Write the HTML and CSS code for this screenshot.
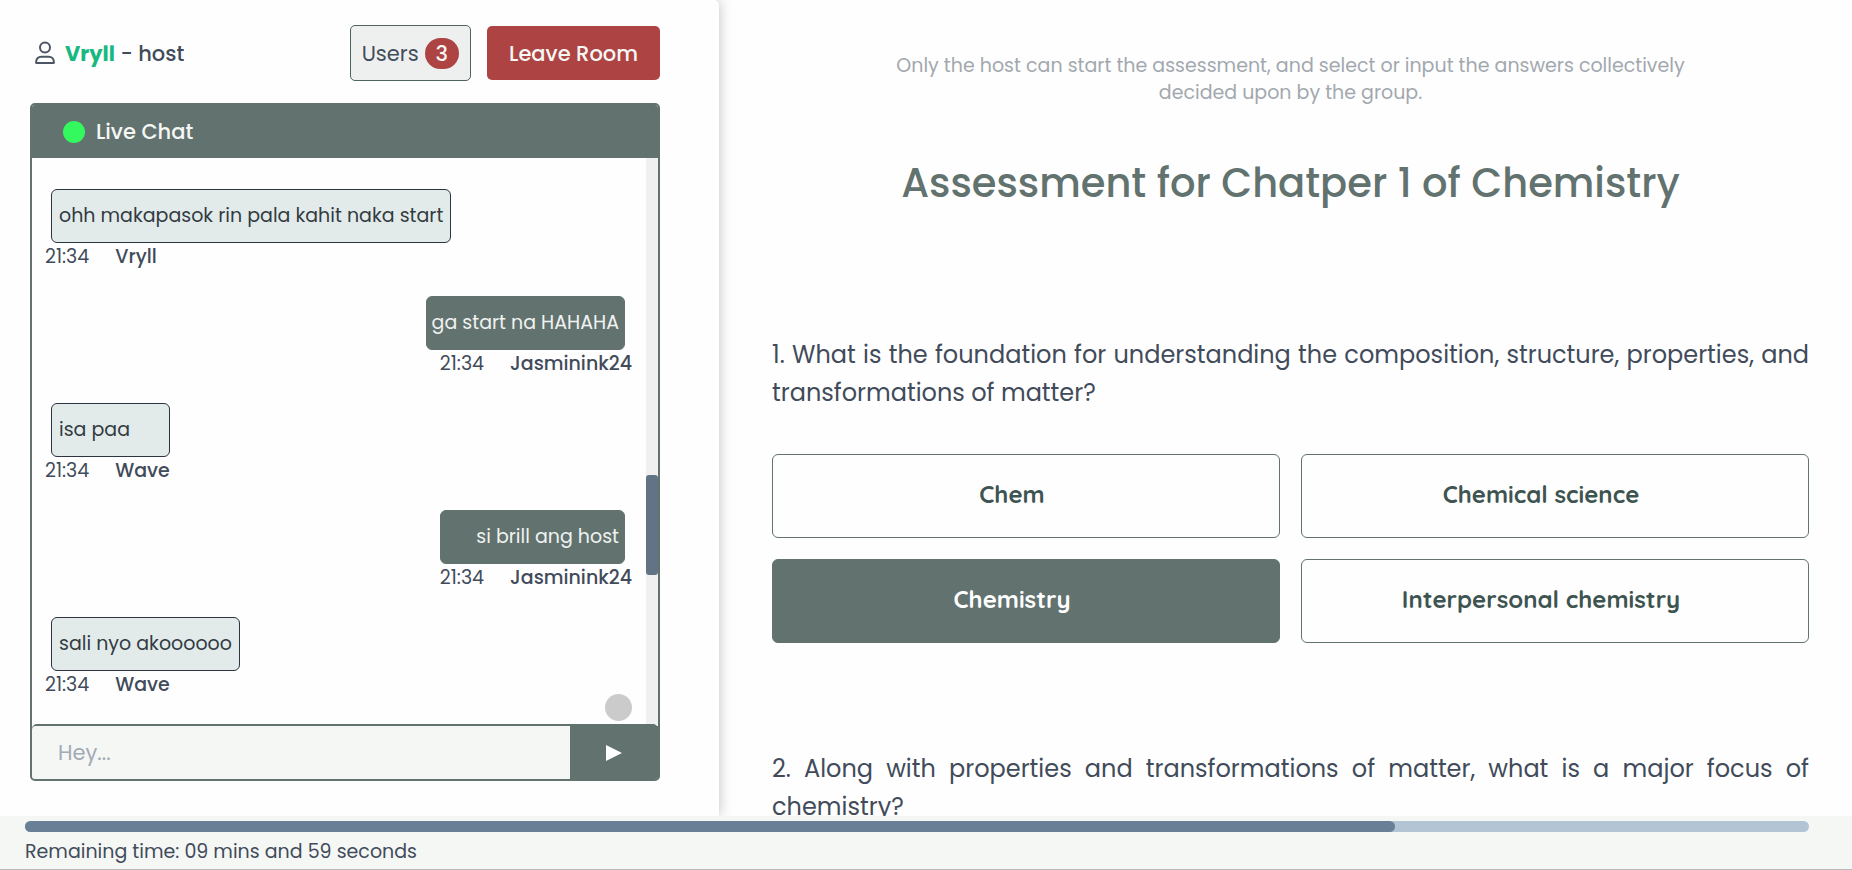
FILE: index.html
```html
<!DOCTYPE html>
<html lang="en">
<head>
<meta charset="utf-8">
<meta name="viewport" content="width=device-width, initial-scale=1">
<title>Assessment Room</title>
<link rel="stylesheet" href="styles.css">
</head>
<body>
<div class="page">
  <div class="room">
    <aside class="panel">
      <header class="panel-head">
        <p class="me">
          <svg class="user-icon" viewBox="0 0 20 24" aria-hidden="true"><circle cx="10" cy="6.500" r="5"/><path d="M1.200 22v-1.500c0-3 2.300-4.800 5-4.800h7.600c2.700 0 5 1.800 5 4.800v1.500z"/></svg>
          <span><strong class="me-name">Vryll</strong> - host</span>
        </p>
        <div class="actions">
          <button class="users" type="button">Users <span class="count">3</span></button>
          <button class="leave" type="button">Leave Room</button>
        </div>
      </header>
      <section class="chat">
        <h2 class="chat-head"><span class="live-dot"></span>Live Chat</h2>
        <div class="chat-body">
          <div class="messages">
            <article class="msg">
              <p class="bubble">ohh makapasok rin pala kahit naka start</p>
              <p class="meta"><time>21:34</time><span class="who">Vryll</span></p>
            </article>
            <article class="msg mine">
              <p class="bubble">ga start na HAHAHA</p>
              <p class="meta"><time>21:34</time><span class="who">Jasminink24</span></p>
            </article>
            <article class="msg">
              <p class="bubble">isa paa</p>
              <p class="meta"><time>21:34</time><span class="who">Wave</span></p>
            </article>
            <article class="msg mine">
              <p class="bubble">si brill ang host</p>
              <p class="meta"><time>21:34</time><span class="who">Jasminink24</span></p>
            </article>
            <article class="msg">
              <p class="bubble">sali nyo akoooooo</p>
              <p class="meta"><time>21:34</time><span class="who">Wave</span></p>
            </article>
          </div>
          <div class="track"><div class="thumb"></div></div>
          <button class="to-bottom" type="button" aria-label="Scroll to latest"></button>
        </div>
        <form class="composer">
          <input class="message-input" type="text" placeholder="Hey..." aria-label="Message">
          <button class="send" type="button" aria-label="Send"><svg class="send-icon" viewBox="0 0 16 16" aria-hidden="true"><path d="M0 0 16 8 0 16z"/></svg></button>
        </form>
      </section>
    </aside>
    <main class="assessment">
      <p class="note">Only the host can start the assessment, and select or input the answers collectively decided upon by the group.</p>
      <h1 class="title">Assessment for Chatper 1 of Chemistry</h1>
      <section class="question">
        <p class="prompt">1. What is the foundation for understanding the composition, structure, properties, and transformations of matter?</p>
        <div class="options">
          <button class="option" type="button">Chem</button>
          <button class="option" type="button">Chemical science</button>
          <button class="option selected" type="button">Chemistry</button>
          <button class="option" type="button">Interpersonal chemistry</button>
        </div>
      </section>
      <section class="question">
        <p class="prompt">2. Along with properties and transformations of matter, what is a major focus of chemistry?</p>
      </section>
    </main>
  </div>
  <footer class="timer">
    <div class="bar"><div class="fill" style="width: 76.8%"></div></div>
    <p class="remaining">Remaining time: 09 mins and 59 seconds</p>
  </footer>
</div>
</body>
</html>
```
FILE: styles.css
```css
* { box-sizing: border-box; margin: 0; }

body {
  background: #fefefe;
  color: #414b5a;
  font-family: Poppins, Inter, "Open Sans", sans-serif;
  font-size: 19px;
  line-height: 27px;
}

button, input { font: inherit; color: inherit; }
button { cursor: pointer; }

.page { display: flex; flex-direction: column; height: 100vh; overflow: hidden; }
.room { display: flex; flex: 1; min-height: 0; }

/* Left panel */
.panel {
  display: flex;
  flex-direction: column;
  flex: 0 0 719px;
  max-width: 50%;
  padding: 25px 59px 35px 30px;
  border-radius: 0 5px 0 0;
  box-shadow: 0 0 14px rgba(0, 0, 0, 0.25);
}
.panel-head { display: flex; align-items: center; justify-content: space-between; margin-bottom: 22px; font-size: 21px; }
.me { display: flex; align-items: center; gap: 10px; padding-left: 5px; font-weight: 500; }
.me-name { color: #18b981; font-weight: 700; }
.user-icon { width: 20px; height: 24px; fill: none; stroke: #4b5563; stroke-width: 2; stroke-linejoin: round; }
.actions { display: flex; align-items: center; gap: 16px; }
.users {
  display: flex;
  align-items: center;
  gap: 6px;
  height: 56px;
  padding: 0 11px;
  border: 1px solid #4d6461;
  border-radius: 5px;
  background: #eef0ef;
}
.count { padding: 2px 11px; border-radius: 16px; background: #ae4343; color: #f5f7f5; font-weight: 500; }
.leave { height: 54px; padding: 0 22px; border: 0; border-radius: 5px; background: #ae4343; color: #f5f7f5; font-weight: 500; }

/* Chat */
.chat {
  display: flex;
  flex-direction: column;
  flex: 1;
  min-height: 0;
  overflow: hidden;
  border: 2px solid #62726f;
  border-radius: 5px;
}
.chat-head {
  display: flex;
  align-items: center;
  gap: 11px;
  height: 53px;
  padding-left: 31px;
  background: #62726f;
  color: #f5f7f5;
  font-size: 21px;
  font-weight: 500;
}
.live-dot { width: 22px; height: 22px; border-radius: 50%; background: #33f95e; }
.chat-body { position: relative; display: flex; flex: 1; min-height: 0; }
.messages {
  display: flex;
  flex-direction: column;
  flex: 1;
  gap: 26px;
  padding: 31px 14px 0 13px;
  overflow: hidden;
}
.msg { display: flex; flex-direction: column; align-self: flex-start; flex-shrink: 0; }
.mine { align-self: flex-end; }
.bubble {
  margin-left: 6px;
  padding: 13px 7px;
  border: 1px solid #2b3440;
  border-radius: 6px;
  background: #e2ebea;
  color: #333b42;
  line-height: 26px;
}
.mine .bubble {
  margin: 0 7px 0 0;
  padding: 13px 5px;
  border-color: #62726f;
  background: #62726f;
  color: #f0f2f1;
  text-align: right;
}
.meta { display: flex; gap: 26px; }
.mine .meta { justify-content: flex-end; }
.who { font-weight: 500; }
.track { position: relative; width: 12px; background: #f0f0f0; }
.thumb { position: absolute; top: 56%; width: 100%; height: 100px; border-radius: 3px; background: #627386; }
.to-bottom {
  position: absolute;
  right: 26px;
  bottom: 3px;
  width: 27px;
  height: 27px;
  padding: 0;
  border: 0;
  border-radius: 50%;
  background: #cbcbcb;
}
.composer { display: flex; height: 55px; border-top: 2px solid #62726f; border-radius: 5px 5px 0 0; background: #62726f; }
.message-input {
  flex: 1;
  min-width: 0;
  padding: 0 26px;
  border: 0;
  border-radius: 4px 0 0 0;
  background: #f5f7f5;
  font-size: 21px;
}
.message-input::placeholder { color: #a3a9b6; opacity: 1; }
.send { display: grid; place-items: center; width: 88px; border: 0; background: #62726f; }
.send-icon { width: 16px; height: 16px; fill: #fff; }

/* Assessment */
.assessment { flex: 1; min-width: 0; padding: 52px 43px 0 53px; overflow: hidden; }
.note { max-width: 830px; margin: 0 auto 49px; color: #a2a8ae; text-align: center; }
.title { margin-bottom: 125px; color: #62726f; font-size: 40px; font-weight: 500; line-height: 56px; text-align: center; }
.question { margin-bottom: 107px; }
.prompt { margin-bottom: 42px; font-size: 24px; line-height: 38px; text-align: justify; }
.options { display: grid; grid-template-columns: 1fr 1fr; gap: 21px; }
.option {
  height: 84px;
  padding: 0 28px 4px 0;
  border: 1px solid #62726f;
  border-radius: 6px;
  background: #fefefe;
  color: #3e5451;
  font-family: Quicksand, Inter, sans-serif;
  font-size: 24px;
  font-weight: 700;
}
.option.selected { background: #62726f; color: #fff; }

/* Timer */
.timer { z-index: 1; padding: 5px 43px 4px 25px; border-bottom: 1px solid #b9bbba; background: #f5f7f5; }
.bar { height: 11px; margin-bottom: 6px; border-radius: 6px; background: #b3c4d5; }
.fill { height: 100%; border-radius: 6px; background: #687f95; }
```
